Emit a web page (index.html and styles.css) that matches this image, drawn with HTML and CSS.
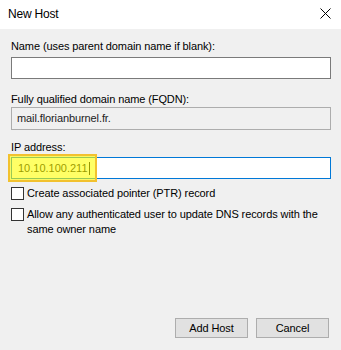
FILE: index.html
```html
<!DOCTYPE html>
<html lang="en">
<head>
  <meta charset="UTF-8" />
  <title>New Host</title>
  <link rel="stylesheet" href="styles.css">
</head>
<body>

<div class="dialog">
  <div class="titlebar">
    <span class="title">New Host</span>
    <svg class="close" width="11" height="11" viewBox="0 0 11 11">
      <path d="M0.5 0.5 L10.5 10.5 M10.5 0.5 L0.5 10.5" stroke="#000" stroke-width="1" fill="none" />
    </svg>
  </div>

  <div class="content">
    <div class="label label-first">Name (uses parent domain name if blank):</div>
    <div class="field field-name"></div>

    <div class="label label-fqdn">Fully qualified domain name (FQDN):</div>
    <div class="field field-readonly">mail.florianburnel.fr.</div>

    <div class="label label-ip">IP address:</div>
    <div class="field field-focus">
      <span class="ip">10.10.100.211</span><span class="caret"></span>
      <div class="highlight"></div>
    </div>

    <div class="check check-first">
      <span class="box"></span>
      <span>Create associated pointer (PTR) record</span>
    </div>
    <div class="check">
      <span class="box"></span>
      <span>Allow any authenticated user to update DNS records with the same owner name</span>
    </div>
  </div>

  <div class="buttons">
    <div class="btn">Add Host</div>
    <div class="btn">Cancel</div>
  </div>
</div>

</body>
</html>
```

FILE: styles.css
```css
body {
  margin: 0;
  background: #f0f0f0;
  font-family: 'Liberation Sans', Arial, sans-serif;
  font-size: 11px;
  letter-spacing: -0.1px;
  color: #000;
}

.dialog {
  height: 350px;
  display: flex;
  flex-direction: column;
}

.titlebar {
  height: 29px;
  background: #fff;
  display: flex;
  align-items: center;
  justify-content: space-between;
  padding: 0 10px 0 8px;
}

.title {
  font-size: 12px;
  letter-spacing: -0.2px;
  margin-top: -1px;
}

.close {
  display: block;
  margin-top: -3px;
}

.content {
  padding: 0 10px 0 11px;
}

.label {
  line-height: 15px;
  height: 15px;
}

.label-first {
  margin-top: 10px;
}

.label-fqdn {
  margin-top: 13px;
}

.label-ip {
  margin-top: 10px;
}

.field {
  box-sizing: border-box;
  border: 1px solid #7a7a7a;
  background: #fff;
  height: 22px;
}

.field-name {
  margin-top: 3px;
}

.field-readonly {
  background: #f0f0f0;
  border-color: #adadad;
  height: 23px;
  line-height: 21px;
  padding-left: 5px;
  color: #222;
}

.field-focus {
  position: relative;
  margin-top: 2px;
  border-color: #0078d7;
  display: flex;
  align-items: center;
  padding-left: 6px;
}

.ip {
  font-size: 11px;
  letter-spacing: 0;
}

.caret {
  display: inline-block;
  width: 1px;
  height: 13px;
  background: #000;
  margin-left: 1px;
}

.highlight {
  position: absolute;
  left: -4px;
  top: -4px;
  width: 89px;
  height: 28px;
  box-sizing: border-box;
  border: 2px solid #f2c12e;
  background: rgba(255, 255, 0, 0.6);
}

.check {
  display: flex;
  align-items: flex-start;
  gap: 3px;
  margin-top: 6px;
  line-height: 15px;
}

.check-first {
  margin-top: 7px;
}

.box {
  flex: none;
  box-sizing: border-box;
  width: 13px;
  height: 13px;
  border: 1px solid #333;
  background: #fff;
  margin-top: 1px;
}

.buttons {
  margin-top: auto;
  display: flex;
  justify-content: flex-end;
  gap: 8px;
  padding: 0 12px 12px 0;
}

.btn {
  box-sizing: border-box;
  width: 73px;
  height: 20px;
  border: 1px solid #adadad;
  background: #e1e1e1;
  text-align: center;
  line-height: 18px;
}
```
